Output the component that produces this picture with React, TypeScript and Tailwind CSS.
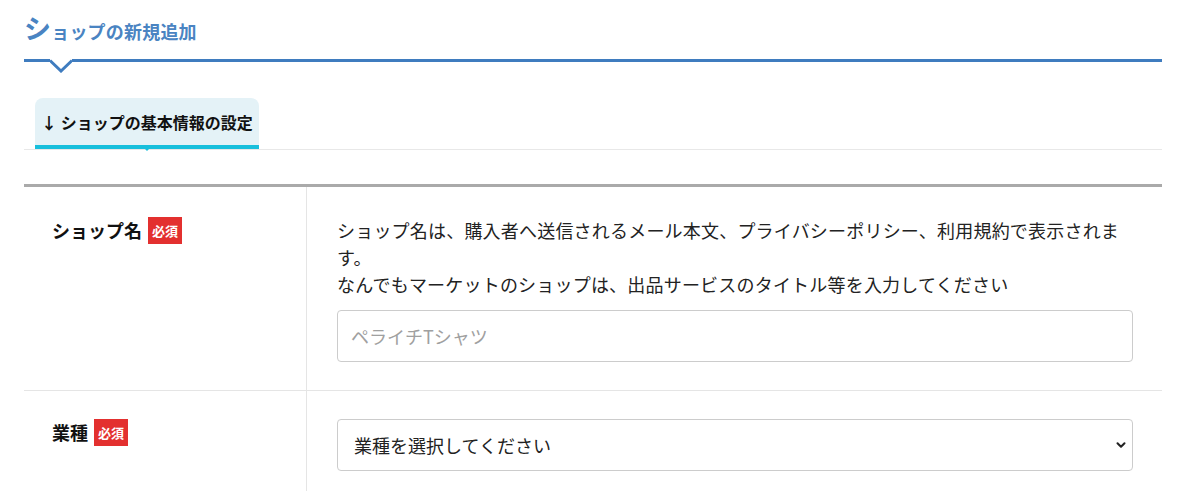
import { ChevronDown } from "lucide-react";

const Required = () => (
  <span className="ml-1.5 inline-flex h-[27px] items-center bg-[#e3302f] px-1 text-[13px] font-bold leading-none tracking-normal text-white">
    必須
  </span>
);

export default function App() {
  return (
    <div className="min-h-screen bg-white pl-6 pr-[38px] font-['Noto_Sans_CJK_JP','Noto_Sans',sans-serif] text-[#222]">
      {/* page title */}
      <h1 className="flex items-baseline pt-[14px] text-[18px] font-bold leading-none tracking-[0.2px] text-[#4a84c2]">
        <span className="text-[27px]">シ</span>
        <span>ョップの新規追加</span>
      </h1>

      <div className="mt-[18px] flex h-[14px] items-start">
        <div className="w-[26px] border-t-[3px] border-[#3f7cbf]" />
        <svg width="22" height="14" viewBox="0 0 22 14" className="block">
          <polyline points="0,1.5 11,12 22,1.5" fill="none" stroke="#3f7cbf" strokeWidth="3" />
        </svg>
        <div className="flex-1 border-t-[3px] border-[#3f7cbf]" />
      </div>

      {/* tab */}
      <div className="mt-[25px] flex border-b border-[#e8e8e8]">
        <div className="relative ml-[11px] flex h-[51px] items-center rounded-t-lg border-b-4 border-[#17bfdc] bg-[#e4f2f7] px-[6px] text-[16px] font-bold text-[#111]">
          ↓ ショップの基本情報の設定
          <span className="absolute left-1/2 top-full h-0 w-0 -translate-x-1/2 border-x-[6px] border-t-[6px] border-x-transparent border-t-[#17bfdc]" />
        </div>
      </div>

      {/* form table */}
      <div className="mt-[34px] border-t-[3px] border-[#aaaaaa]">
        <div className="grid grid-cols-[283px_1fr] border-b border-[#e5e5e5]">
          <div className="h-full border-r border-[#e5e5e5] pl-7 pt-[30px] text-[18px] font-bold leading-[27px] text-[#111]">
            <div className="flex items-center">
              ショップ名
              <Required />
            </div>
          </div>
          <div className="pb-7 pl-[30px] pr-[29px] pt-[30px]">
            <p className="pr-3 text-[18px] leading-[27px] tracking-[0.2px]">
              ショップ名は、購入者へ送信されるメール本文、プライバシーポリシー、利用規約で表示されます。
              <br />
              なんでもマーケットのショップは、出品サービスのタイトル等を入力してください
            </p>
            <input
              type="text"
              placeholder="ペライチTシャツ"
              className="mt-3 block h-[52px] w-full rounded-[4px] border border-[#cccccc] px-[13px] text-[18px] placeholder:text-[#a0a0a0] focus:outline-none"
            />
          </div>
        </div>

        <div className="grid grid-cols-[283px_1fr] border-b border-[#e5e5e5]">
          <div className="h-full border-r border-[#e5e5e5] pl-7 pt-7 text-[18px] font-bold leading-[27px] text-[#111]">
            <div className="flex items-center">
              業種
              <Required />
            </div>
          </div>
          <div className="pb-7 pl-[30px] pr-[29px] pt-7">
            <div className="relative">
              <select className="block h-[52px] w-full appearance-none rounded-[4px] border border-[#cccccc] bg-white pl-4 text-[18px] text-[#222] focus:outline-none">
                <option>業種を選択してください</option>
              </select>
              <ChevronDown
                size={14}
                strokeWidth={3.5}
                className="pointer-events-none absolute right-[5px] top-1/2 -translate-y-1/2 text-[#222]"
              />
            </div>
          </div>
        </div>
      </div>
    </div>
  );
}
